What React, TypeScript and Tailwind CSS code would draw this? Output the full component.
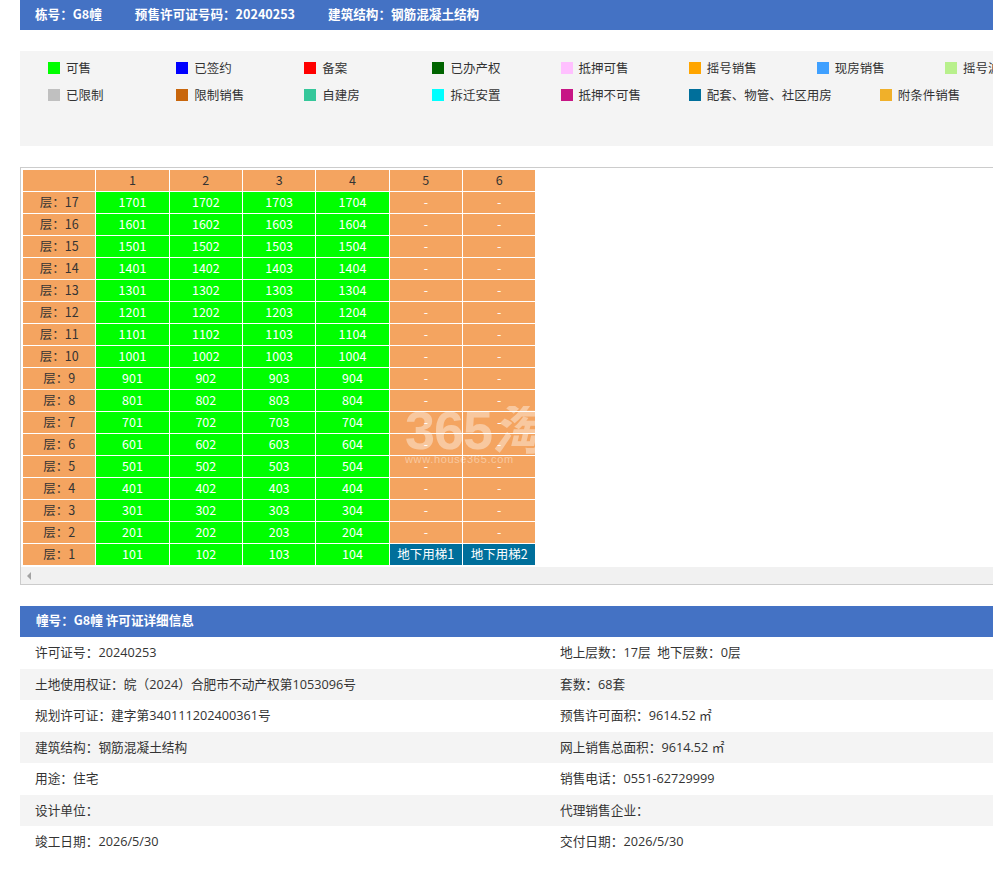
const legendRowOne = [
  { label: "可售", color: "bg-[#00ff00]" },
  { label: "已签约", color: "bg-[#0000ff]" },
  { label: "备案", color: "bg-[#ff0000]" },
  { label: "已办产权", color: "bg-[#006400]" },
  { label: "抵押可售", color: "bg-[#ffc0ff]" },
  { label: "摇号销售", color: "bg-[#ffa500]" },
  { label: "现房销售", color: "bg-[#3fa0ff]" },
  { label: "摇号波段", color: "bg-[#b8f08c]" },
];

const legendRowTwo = [
  { label: "已限制", color: "bg-[#c0c0c0]", width: "w-[128.15px]" },
  { label: "限制销售", color: "bg-[#c8660c]", width: "w-[128.15px]" },
  { label: "自建房", color: "bg-[#35c79a]", width: "w-[128.15px]" },
  { label: "拆迁安置", color: "bg-[#00ffff]", width: "w-[128.15px]" },
  { label: "抵押不可售", color: "bg-[#c71585]", width: "w-[128.15px]" },
  { label: "配套、物管、社区用房", color: "bg-[#006f9b]", width: "w-[191px]" },
  { label: "附条件销售", color: "bg-[#f0b02a]", width: "w-[128.15px]" },
];

const floors = Array.from({ length: 17 }, (_, i) => 17 - i);

const details = [
  ["许可证号：20240253", "地上层数：17层  地下层数：0层"],
  ["土地使用权证：皖（2024）合肥市不动产权第1053096号", "套数：68套"],
  ["规划许可证：建字第340111202400361号", "预售许可面积：9614.52 ㎡"],
  ["建筑结构：钢筋混凝土结构", "网上销售总面积：9614.52 ㎡"],
  ["用途：住宅", "销售电话：0551-62729999"],
  ["设计单位：", "代理销售企业："],
  ["竣工日期：2026/5/30", "交付日期：2026/5/30"],
];

const Cell = ({ children, className }: { children?: React.ReactNode; className: string }) => (
  <td className={`h-[22px] border border-white p-0 pb-[2px] text-center leading-[19px] ${className}`}>
    {children}
  </td>
);

const LegendItem = ({ label, color, width }: { label: string; color: string; width: string }) => (
  <div className={`flex shrink-0 items-center ${width}`}>
    <span className={`h-3 w-3 shrink-0 ${color}`}></span>
    <span className="ml-[6px] mt-[2px] whitespace-nowrap">{label}</span>
  </div>
);

export default function App() {
  return (
    <div className="h-[874px] overflow-hidden bg-white pl-5 text-[12.5px] text-[#333333] [font-family:'Noto_Sans_CJK_SC','Microsoft_YaHei',sans-serif]">
      <div className="w-[1100px]">
        <div className="flex h-[30px] items-center gap-[33px] bg-[#4472c4] pb-[2px] pl-[15px] text-[12.6px] font-bold text-white">
          <span>栋号：G8幢</span>
          <span>预售许可证号码：20240253</span>
          <span>建筑结构：钢筋混凝土结构</span>
        </div>

        <div className="mt-[21px] h-[95px] bg-[#f4f4f4] pl-7 pt-[3px]">
          <div className="flex h-[27px]">
            {legendRowOne.map((item) => (
              <LegendItem key={item.label} {...item} width="w-[128.15px]" />
            ))}
          </div>
          <div className="flex h-[27px]">
            {legendRowTwo.map((item) => (
              <LegendItem key={item.label} {...item} />
            ))}
          </div>
        </div>

        <div className="relative mt-[21px] h-[418px] border border-[#cccccc]">
          <table className="ml-px mt-px table-fixed border-collapse text-[#333333]">
            <tbody>
              <tr>
                <Cell className="w-[73.33px] bg-[#f4a460]" />
                {[1, 2, 3, 4, 5, 6].map((n) => (
                  <Cell key={n} className="w-[73.33px] bg-[#f4a460]">
                    {n}
                  </Cell>
                ))}
              </tr>
              {floors.map((floor) => (
                <tr key={floor}>
                  <Cell className="bg-[#f4a460]">层：{floor}</Cell>
                  {[1, 2, 3, 4].map((n) => (
                    <Cell key={n} className="bg-[#00ff00] text-white">
                      {floor * 100 + n}
                    </Cell>
                  ))}
                  {[1, 2].map((n) =>
                    floor === 1 ? (
                      <Cell key={n} className="whitespace-nowrap bg-[#006f9b] text-white">
                        地下用梯{n}
                      </Cell>
                    ) : (
                      <Cell key={n} className="bg-[#f4a460] text-white">
                        -
                      </Cell>
                    ),
                  )}
                </tr>
              ))}
            </tbody>
          </table>

          {/* watermark sits over the table and is cut off at its right edge */}
          <div className="pointer-events-none absolute left-[384px] top-[238px] h-[62px] w-[131px] overflow-hidden text-white/40">
            <div className="whitespace-nowrap text-[54px] font-bold leading-[48px] tracking-[-1px] [font-family:'Liberation_Sans','Noto_Sans_CJK_SC',sans-serif]">
              365<span className="italic">淘</span>
            </div>
            <div className="whitespace-nowrap text-[11px] leading-[11px] tracking-[0.65px] [font-family:'Liberation_Sans',sans-serif]">www.house365.com</div>
          </div>

          <div className="absolute bottom-0 left-0 right-0 flex h-[17px] items-center bg-[#f1f1f1] pl-[6px]">
            <span className="h-0 w-0 border-y-[4px] border-r-[4px] border-y-transparent border-r-[#a3a3a3]"></span>
          </div>
        </div>

        <div className="mt-[21px] flex h-[31px] items-center bg-[#4472c4] pb-[2px] pl-4 text-[12.6px] font-bold text-white">
          幢号：G8幢 许可证详细信息
        </div>
        {details.map(([left, right], i) => (
          <div
            key={left}
            className={`flex h-[31.5px] items-center whitespace-pre text-[12.7px] [font-family:'Open_Sans','Noto_Sans_CJK_SC',sans-serif] ${i % 2 === 1 ? "bg-[#f4f4f4]" : "bg-white"}`}
          >
            <div className="w-[540px] pl-[15px]">{left}</div>
            <div>{right}</div>
          </div>
        ))}
      </div>
    </div>
  );
}
